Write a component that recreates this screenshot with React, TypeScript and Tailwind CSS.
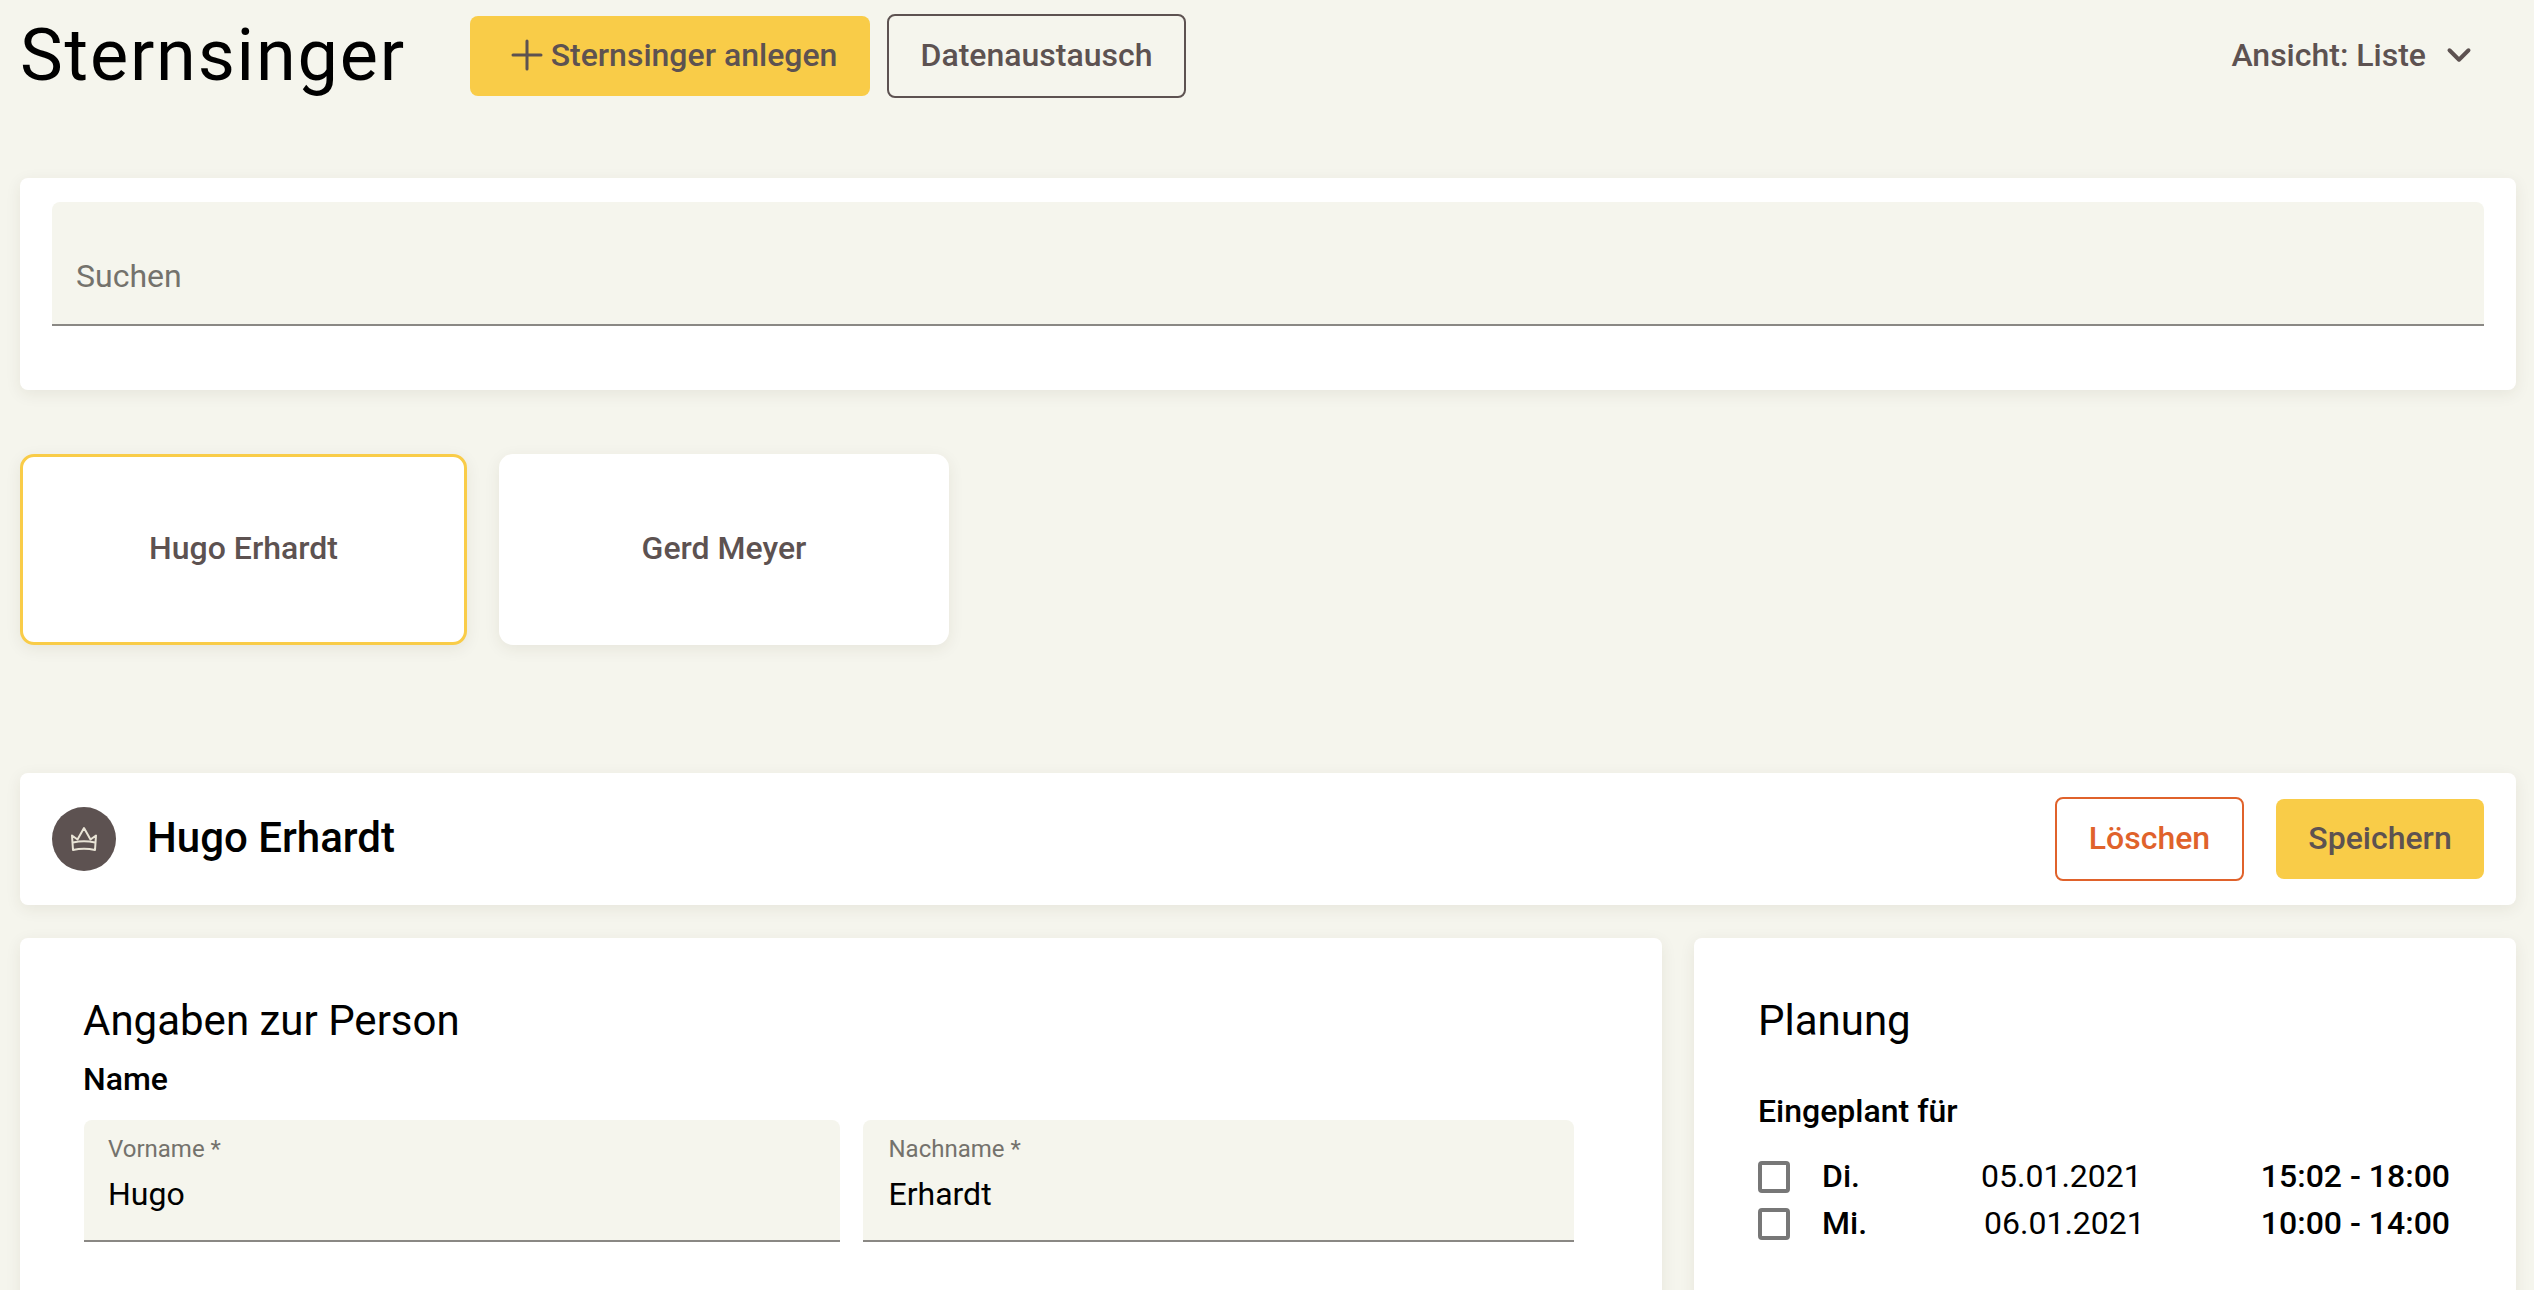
import React from 'react';
import { Plus, ChevronDown } from 'lucide-react';

const Crown = () => (
  <svg width="28" height="26" viewBox="0 0 28 26" fill="none" stroke="#e9e4d6" strokeWidth="2" strokeLinejoin="round">
    <path d="M2 9.5 L7.5 13.5 L14 2 L20.5 13.5 L26 9.5 L25 24 Q14 21.5 3 24 Z" />
    <path d="M3 16.5 Q14 14 25 16.5" />
  </svg>
);

const Field: React.FC<{ label: string; value: string; className: string }> = ({ label, value, className }) => (
  <div className={`h-[122px] rounded-t-lg bg-[#f5f5ed] border-b-2 border-[#8a8884] pt-[13px] ${className}`}>
    <div className="text-[24px] leading-[32px] text-[#74726c]">{label}</div>
    <div className="mt-[5px] text-[32px] leading-[48px] text-black">{value}</div>
  </div>
);

const Slot: React.FC<{ day: string; date: string; time: string; dateClass: string }> = ({ day, date, time, dateClass }) => (
  <div className="flex h-[47px] items-center text-[32px] text-black">
    <span className="h-[32px] w-[32px] shrink-0 rounded-[4px] border-[4px] border-[#777777]" />
    <span className="ml-8 w-[120px] pb-[2px] font-medium">{day}</span>
    <span className={`pb-[2px] ${dateClass}`}>{date}</span>
    <span className="ml-auto pb-[2px] font-medium">{time}</span>
  </div>
);

export default function App() {
  return (
    <div className="h-screen overflow-hidden bg-[#f5f5ed] pl-5 pr-[18px] font-['Roboto',sans-serif]">
      <header className="flex h-[84px] mt-[14px] items-center">
        <h1 className="w-[450px] text-[72px] leading-none font-normal tracking-[1.8px] text-black">Sternsinger</h1>
        <button className="flex h-[80px] w-[400px] items-center justify-center rounded-lg bg-[#f9cc48] pb-[2px] text-[32px] font-medium text-[#5d5251]">
          <Plus size={48} strokeWidth={1.5} />
          Sternsinger anlegen
        </button>
        <button className="ml-[17px] h-[84px] w-[299px] rounded-lg border-2 border-[#5d5251] pb-[2px] text-[32px] font-medium text-[#5d5251]">
          Datenaustausch
        </button>
        <div className="ml-auto mr-[38px] flex items-center gap-[14px] pb-[2px] text-[32px] font-medium text-[#5d5251]">
          Ansicht: Liste
          <ChevronDown size={38} strokeWidth={2.5} />
        </div>
      </header>

      <section className="mt-[80px] h-[212px] rounded-lg bg-white px-8 pt-6 shadow-[0_4px_16px_rgba(60,50,30,0.08)]">
        <div className="flex h-[124px] items-end rounded-t-lg border-b-2 border-[#8a8884] bg-[#f5f5ed] px-6 pb-[24px] text-[32px] leading-[48px] text-[#74726c]">
          Suchen
        </div>
      </section>

      <div className="mt-[64px] flex gap-8">
        <div className="flex h-[191px] w-[447px] items-center justify-center rounded-[14px] border-[3px] border-[#f9cc48] bg-white pb-[3px] text-[32px] font-medium text-[#5d5251] shadow-[0_4px_16px_rgba(60,50,30,0.08)]">
          Hugo Erhardt
        </div>
        <div className="flex h-[191px] w-[450px] items-center justify-center rounded-[14px] bg-white pb-[3px] text-[32px] font-medium text-[#5d5251] shadow-[0_4px_16px_rgba(60,50,30,0.08)]">
          Gerd Meyer
        </div>
      </div>

      <section className="mt-[128px] flex h-[132px] items-center rounded-lg bg-white pl-8 pr-8 shadow-[0_4px_16px_rgba(60,50,30,0.08)]">
        <div className="flex h-[64px] w-[64px] items-center justify-center rounded-full bg-[#5d5251]">
          <Crown />
        </div>
        <h2 className="ml-[31px] pb-[3px] text-[42px] font-medium text-black">Hugo Erhardt</h2>
        <button className="ml-auto h-[84px] w-[189px] rounded-lg border-2 border-[#e0622b] pb-[2px] text-[32px] font-medium text-[#e0622b]">
          Löschen
        </button>
        <button className="ml-8 h-[80px] w-[208px] rounded-lg bg-[#f9cc48] pb-[2px] text-[32px] font-medium text-[#5d5251]">
          Speichern
        </button>
      </section>

      <div className="mt-[33px] flex gap-8">
        <section className="h-[600px] w-[1642px] rounded-lg bg-white pl-[63px] pr-[88px] pt-[53px] shadow-[0_4px_16px_rgba(60,50,30,0.08)]">
          <h3 className="text-[42px] leading-[60px] font-normal text-black">Angaben zur Person</h3>
          <div className="mt-[4px] text-[32px] leading-[48px] font-medium text-black">Name</div>
          <div className="ml-[1px] mt-[17px] flex gap-[23px]">
            <Field label="Vorname *" value="Hugo" className="w-[757px] pl-6" />
            <Field label="Nachname *" value="Erhardt" className="w-[711px] pl-[25px]" />
          </div>
        </section>

        <section className="h-[600px] flex-1 rounded-lg bg-white pl-[64px] pr-[66px] pt-[53px] shadow-[0_4px_16px_rgba(60,50,30,0.08)]">
          <h3 className="text-[42px] leading-[60px] font-normal text-black">Planung</h3>
          <div className="mt-[36px] text-[32px] leading-[48px] font-medium text-black">Eingeplant für</div>
          <div className="mt-[18px]">
            <Slot day="Di." date="05.01.2021" time="15:02 - 18:00" dateClass="ml-[39px]" />
            <Slot day="Mi." date="06.01.2021" time="10:00 - 14:00" dateClass="ml-[42px]" />
          </div>
        </section>
      </div>
    </div>
  );
}
